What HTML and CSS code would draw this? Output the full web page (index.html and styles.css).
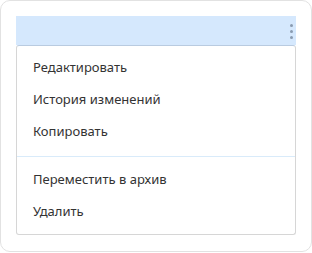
FILE: index.html
```html
<!DOCTYPE html>
<html lang="ru">
<head>
  <meta charset="UTF-8">
  <title>Меню действий</title>
  <link rel="stylesheet" href="styles.css">
</head>
<body>
  <div class="card">
    <!-- Selected row -->
    <div class="row-bar">
      <span class="more-btn">
        <span class="dot"></span>
        <span class="dot"></span>
        <span class="dot"></span>
      </span>
    </div>

    <!-- Dropdown -->
    <div class="menu">
      <ul class="menu-group first">
        <li>Редактировать</li>
        <li>История изменений</li>
        <li>Копировать</li>
      </ul>
      <ul class="menu-group last">
        <li>Переместить в архив</li>
        <li>Удалить</li>
      </ul>
    </div>
  </div>
</body>
</html>
```

FILE: styles.css
```css
body {
  margin: 0;
  font-family: 'Noto Sans', sans-serif;
  color: #333;
  background-color: #fff;
}

.card {
  width: 312px;
  height: 252px;
  box-sizing: border-box;
  border: 1px solid #e2e2e2;
  border-radius: 10px;
  padding: 15px;
}

.row-bar {
  height: 29px;
  background-color: #d5e8fd;
  display: flex;
  justify-content: flex-end;
  align-items: center;
  padding-right: 3px;
}

.more-btn {
  display: flex;
  flex-direction: column;
  gap: 3px;
  margin-top: 2px;
}

.dot {
  width: 3px;
  height: 3px;
  border-radius: 50%;
  background-color: #8a9bb1;
}

.menu {
  border: 1px solid #d6d6d6;
  border-top-color: #b9cbe0;
  border-radius: 3px;
}

.menu-group {
  list-style: none;
  margin: 0;
  padding: 0;
}

.menu-group.first {
  padding: 5px 0 9px;
  border-bottom: 1px solid #d9ebfa;
}

.menu-group.last {
  padding: 6px 0 7px;
}

.menu-group li {
  height: 32px;
  line-height: 32px;
  padding-left: 16px;
  font-size: 13px;
}
```
